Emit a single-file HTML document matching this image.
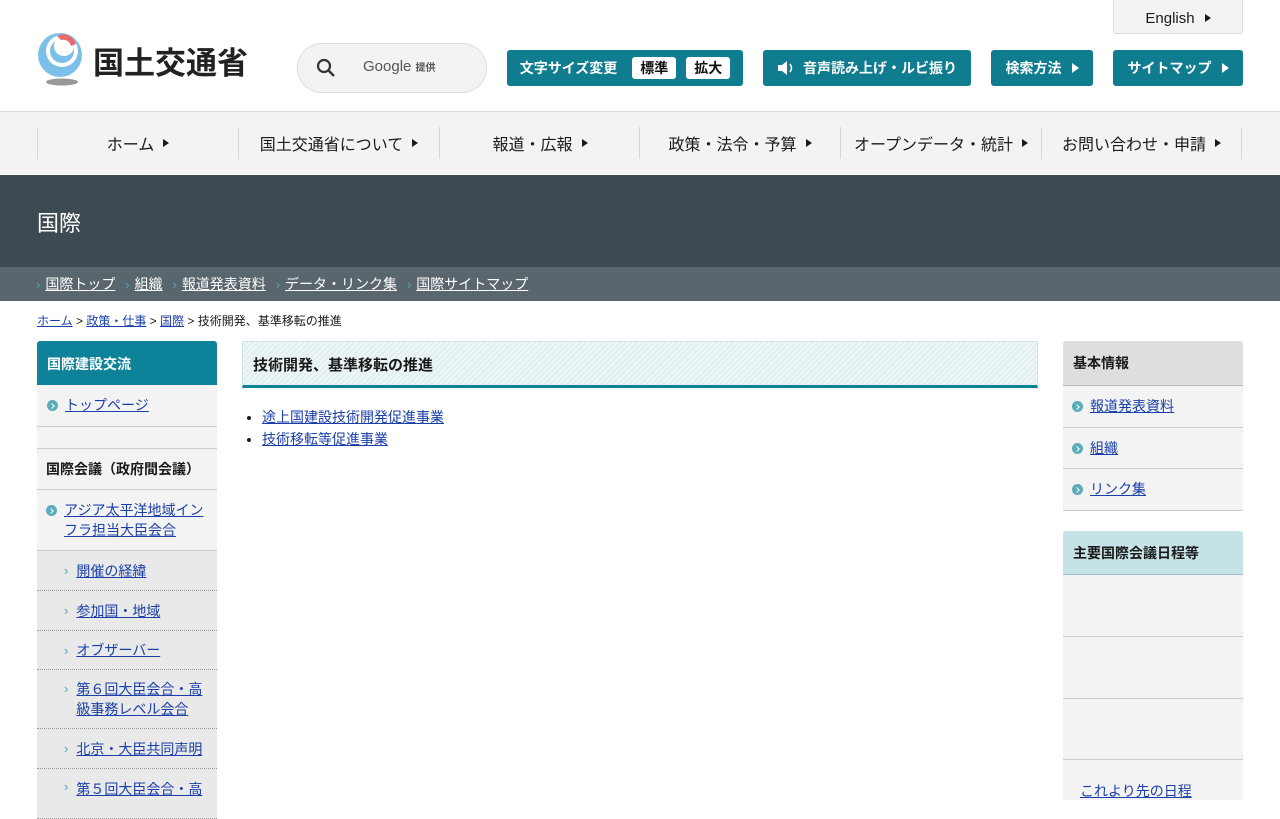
<!DOCTYPE html>
<html><head><meta charset="utf-8">
<style>
*{margin:0;padding:0;box-sizing:border-box}
body{width:1280px;height:800px;overflow:hidden;position:relative;background:#fff;font-family:"Liberation Sans","Noto Sans CJK JP",sans-serif;color:#1a1a1a}
.a{position:absolute}
a{color:#1a3fa8;text-decoration:underline}
.btn{position:absolute;top:50px;height:36px;background:#0f7c8f;color:#fff;border-radius:3px;font-size:14px;font-weight:bold;display:flex;align-items:center;justify-content:center}
.tri{display:inline-block;width:0;height:0;border-left:7px solid currentColor;border-top:5px solid transparent;border-bottom:5px solid transparent;margin-left:10px}
.nav{position:absolute;top:111px;height:63px;left:0;width:1280px;background:#f3f3f3;border-top:1px solid #ddd}
.nav div{position:absolute;top:15px;height:32px;border-left:1px solid #d6d6d6;display:flex;align-items:center;justify-content:center;font-size:16px;width:201px}
.nav .tri{border-left-width:6px;border-top-width:4px;border-bottom-width:4px;margin-left:9px}
.ls div{position:absolute;left:37px;width:180px;font-size:14px}
.dot{display:inline-block;width:11px;height:11px;border-radius:50%;background:#5aacb8;margin-right:7px;vertical-align:-1px;position:relative}
.dot:after{content:"";position:absolute;left:3px;top:3.5px;width:3px;height:3px;border-right:1.2px solid #fff;border-top:1.2px solid #fff;transform:rotate(45deg)}
.chev{color:#4aa8b8;margin-right:8px;font-size:13px}
.sub{background:#e9e9e9;border-bottom:1px dotted #999;padding-left:27px;padding-right:14px;display:flex;align-items:center}
</style></head><body>
<!-- logo -->
<svg class="a" style="left:37px;top:32px" width="52" height="56" viewBox="0 0 52 56">
<circle cx="23" cy="23" r="22" fill="#7cbfe8"/>
<circle cx="25" cy="19" r="16" fill="#fff"/>
<circle cx="25" cy="19" r="12" fill="#7cbfe8"/>
<circle cx="27" cy="14" r="10" fill="#fff"/>
<path d="M20 4 A13 13 0 0 1 39 12 L34 14 A8 8 0 0 0 24 8Z" fill="#e96a6e"/>
<ellipse cx="25" cy="50" rx="16" ry="3.5" fill="#999"/>
</svg>
<div class="a" style="left:93px;top:38px;font-size:31px;font-weight:bold;letter-spacing:0;color:#222">国土交通省</div>
<div class="a" style="left:297px;top:43px;width:190px;height:50px;border:1px solid #ddd;border-radius:25px;background:#f3f3f3"></div>
<svg class="a" style="left:316px;top:58px" width="20" height="20" viewBox="0 0 20 20"><circle cx="8" cy="8" r="6" fill="none" stroke="#333" stroke-width="2.2"/><path d="M12.5 12.5 L18 18" stroke="#333" stroke-width="2.4"/></svg>
<div class="a" style="left:363px;top:58px;font-size:15px;color:#555">Google <span style="font-size:10px;font-weight:bold">提供</span></div>
<div class="a" style="left:1113px;top:0;width:130px;height:34px;background:#f3f3f3;border:1px solid #ddd;border-top:none;border-radius:0 0 3px 3px;font-size:15px;display:flex;align-items:center;justify-content:center;padding-top:3px">English<span class="tri" style="border-left-width:6px;border-top-width:4px;border-bottom-width:4px"></span></div>
<div class="btn" style="left:507px;width:236px">文字サイズ変更<span style="background:#fff;color:#111;padding:1px 8px;border-radius:3px;margin-left:15px">標準</span><span style="background:#fff;color:#111;padding:1px 8px;border-radius:3px;margin-left:10px">拡大</span></div>
<div class="btn" style="left:763px;width:208px"><svg width="18" height="16" viewBox="0 0 18 16" style="margin-right:8px"><path d="M1 5h4l5-4v14l-5-4H1z" fill="#fff"/><path d="M13 4q3 4 0 8" stroke="#fff" stroke-width="1.5" fill="none"/></svg>音声読み上げ・ルビ振り</div>
<div class="btn" style="left:991px;width:102px">検索方法<span class="tri"></span></div>
<div class="btn" style="left:1113px;width:130px">サイトマップ<span class="tri"></span></div>

<div class="nav">
<div style="left:37px">ホーム<span class="tri"></span></div>
<div style="left:238px">国土交通省について<span class="tri"></span></div>
<div style="left:439px">報道・広報<span class="tri"></span></div>
<div style="left:639px">政策・法令・予算<span class="tri"></span></div>
<div style="left:840px">オープンデータ・統計<span class="tri"></span></div>
<div style="left:1041px;border-right:1px solid #d6d6d6;width:201px">お問い合わせ・申請<span class="tri"></span></div>
</div>
<div class="a" style="left:0;top:175px;width:1280px;height:92px;background:#3d4a51"></div>
<div class="a" style="left:37px;top:206px;color:#fff;font-size:22px">国際</div>
<div class="a" style="left:0;top:267px;width:1280px;height:34px;background:#5a666d;font-size:14px;color:#fff;padding:7px 0 0 36px">
<span class="chev" style="margin-right:5px">›</span><a style="color:#fff">国際トップ</a> <span class="chev" style="margin:0 5px 0 6px">›</span><a style="color:#fff">組織</a> <span class="chev" style="margin:0 5px 0 6px">›</span><a style="color:#fff">報道発表資料</a> <span class="chev" style="margin:0 5px 0 6px">›</span><a style="color:#fff">データ・リンク集</a> <span class="chev" style="margin:0 5px 0 6px">›</span><a style="color:#fff">国際サイトマップ</a></div>
<div class="a" style="left:37px;top:312px;font-size:12px"><a>ホーム</a> &gt; <a>政策・仕事</a> &gt; <a>国際</a> &gt; 技術開発、基準移転の推進</div>

<!-- left sidebar -->
<div class="ls">
<div style="top:341px;height:44px;background:#0e8299;color:#fff;font-weight:bold;border-radius:3px 3px 0 0;padding:13px 0 0 10px">国際建設交流</div>
<div style="top:385px;height:42px;background:#f3f3f3;border-bottom:1px solid #ccc;padding:10px 0 0 10px"><span class="dot"></span><a>トップページ</a></div>
<div style="top:427px;height:22px;background:#f3f3f3;border-bottom:1px solid #ccc"></div>
<div style="top:449px;height:41px;background:#f3f3f3;border-bottom:1px solid #ccc;padding:10px 0 0 9px;font-weight:bold">国際会議（政府間会議）</div>
<div style="top:490px;height:61px;background:#f3f3f3;border-bottom:1px solid #ccc;padding:10px 8px 0 27px;line-height:20px;text-indent:-18px"><span class="dot"></span><a>アジア太平洋地域インフラ担当大臣会合</a></div>
<div class="sub" style="top:551px;height:40px"><span class="chev">›</span><a>開催の経緯</a></div>
<div class="sub" style="top:591px;height:40px"><span class="chev">›</span><a>参加国・地域</a></div>
<div class="sub" style="top:631px;height:39px"><span class="chev">›</span><a>オブザーバー</a></div>
<div class="sub" style="top:670px;height:59px;line-height:20px;align-items:flex-start;padding-top:9px"><span class="chev">›</span><a>第６回大臣会合・高級事務レベル会合</a></div>
<div class="sub" style="top:729px;height:40px"><span class="chev">›</span><a>北京・大臣共同声明</a></div>
<div class="sub" style="top:769px;height:50px;align-items:flex-start;padding-top:10px"><span class="chev">›</span><a>第５回大臣会合・高</a></div>
</div>

<!-- main -->
<div class="a" style="left:242px;top:341px;width:796px;height:47px;border:1px solid #cfe3e6;border-bottom:3px solid #0e8299;background:repeating-linear-gradient(135deg,#eef6f7 0 2px,#e2eff1 2px 4px);font-size:15px;font-weight:bold;padding:12px 0 0 10px">技術開発、基準移転の推進</div>
<ul class="a" style="left:262px;top:406px;font-size:14px;line-height:22px">
<li><a>途上国建設技術開発促進事業</a></li>
<li><a>技術移転等促進事業</a></li>
</ul>

<!-- right -->
<div class="ls">
<div style="left:1063px;top:341px;height:45px;background:#dedede;border-bottom:1px solid #bbb;border-radius:3px 3px 0 0;padding:12px 0 0 10px;font-weight:bold">基本情報</div>
<div style="left:1063px;top:386px;height:42px;background:#f3f3f3;border-bottom:1px solid #ccc;padding:10px 0 0 9px"><span class="dot"></span><a>報道発表資料</a></div>
<div style="left:1063px;top:428px;height:41px;background:#f3f3f3;border-bottom:1px solid #ccc;padding:10px 0 0 9px"><span class="dot"></span><a>組織</a></div>
<div style="left:1063px;top:469px;height:42px;background:#f3f3f3;border-bottom:1px solid #ccc;padding:10px 0 0 9px"><span class="dot"></span><a>リンク集</a></div>
<div style="left:1063px;top:531px;height:44px;background:#c5e2e7;border-bottom:1px solid #9bbfc5;border-radius:3px 3px 0 0;padding:12px 0 0 10px;font-weight:bold">主要国際会議日程等</div>
<div style="left:1063px;top:575px;height:62px;background:#f3f3f3;border-bottom:1px solid #ccc"></div>
<div style="left:1063px;top:637px;height:62px;background:#f3f3f3;border-bottom:1px solid #ccc"></div>
<div style="left:1063px;top:699px;height:61px;background:#f3f3f3;border-bottom:1px solid #ccc"></div>
<div style="left:1063px;top:760px;height:40px;background:#f3f3f3;padding:21px 0 0 17px"><a>これより先の日程</a></div>
</div>
</body></html>
